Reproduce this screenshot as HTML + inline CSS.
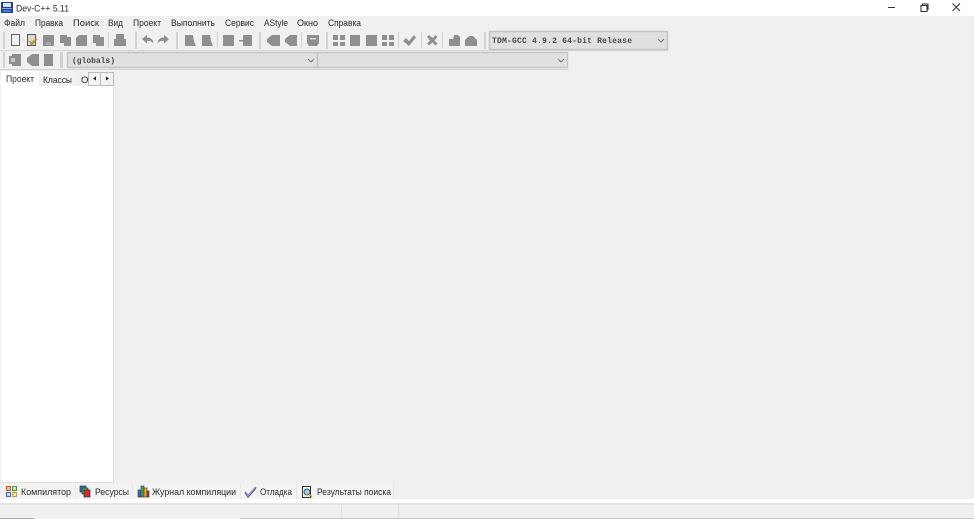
<!DOCTYPE html>
<html><head><meta charset="utf-8"><style>
html,body{margin:0;padding:0;background:#f0f0f0;width:974px;height:519px;overflow:hidden}
svg{display:block;filter:blur(.35px)}
text{font-family:"Liberation Sans",sans-serif;font-size:9.5px;fill:#2a2a2a}
.m{font-family:"Liberation Mono",monospace;font-size:8px;font-weight:bold;fill:#4a4a4a}
.g{fill:#8f8f8f}
.sep{fill:#d2d2d2}
.cb{fill:#e0e0e0;stroke:#c4c4c4;stroke-width:1.500}
.ar{fill:none;stroke:#777}
</style></head><body>
<svg width="974" height="519" viewBox="0 0 974 519" xmlns="http://www.w3.org/2000/svg">
<rect width="974" height="519" fill="#f0f0f0"/>
<!-- title bar -->
<rect width="974" height="16" fill="#fff"/>
<rect x="1" y="2" width="12" height="11" fill="#1f3f95"/>
<rect x="3" y="3" width="8" height="4" fill="#dfe6f2"/>
<rect x="2" y="8" width="10" height="1" fill="#8aa8dc"/>
<rect x="3" y="10" width="8" height="2" fill="#3f7fd0"/>
<text x="16" y="11.500" textLength="53" lengthAdjust="spacingAndGlyphs">Dev-C++ 5.11</text>
<path d="M888 7.500h7" stroke="#333" stroke-width="1"/>
<path d="M921 5.500h6v6h-6z M922.500 5.500v-1.500h5.500v5.500h-1" fill="none" stroke="#333" stroke-width="1.100"/>
<path d="M952.500 3.500l7.500 7.500M960 3.500l-7.500 7.500" stroke="#333" stroke-width="1"/>
<!-- menu -->
<text x="4" y="26" textLength="21" lengthAdjust="spacingAndGlyphs">Файл</text>
<text x="35" y="26" textLength="28" lengthAdjust="spacingAndGlyphs">Правка</text>
<text x="73" y="26" textLength="26" lengthAdjust="spacingAndGlyphs">Поиск</text>
<text x="108" y="26" textLength="15" lengthAdjust="spacingAndGlyphs">Вид</text>
<text x="133" y="26" textLength="28" lengthAdjust="spacingAndGlyphs">Проект</text>
<text x="171" y="26" textLength="44" lengthAdjust="spacingAndGlyphs">Выполнить</text>
<text x="225" y="26" textLength="29" lengthAdjust="spacingAndGlyphs">Сервис</text>
<text x="264" y="26" textLength="24" lengthAdjust="spacingAndGlyphs">AStyle</text>
<text x="297" y="26" textLength="21" lengthAdjust="spacingAndGlyphs">Окно</text>
<text x="328" y="26" textLength="33" lengthAdjust="spacingAndGlyphs">Справка</text>
<!-- toolbar 1 -->
<rect x="0" y="50" width="668" height="1" fill="#d6d6d6"/>
<rect x="3" y="32" width="2" height="17" class="sep"/>
<rect x="11.500" y="34.500" width="8" height="11" fill="#f0f0f0" stroke="#666"/>
<rect x="27.500" y="34.500" width="8" height="11" fill="#dcd8cc" stroke="#555"/>
<path d="M30 44l6-6 1.500 1.500-6 6z" fill="#b98f35"/>
<path d="M29 41l4 3" stroke="#a97a20"/>
<rect x="43" y="35" width="11" height="11" class="g"/>
<rect x="46" y="42" width="5" height="3" fill="#aaa"/>
<path class="g" d="M60 35h7v2h4v9h-7v-3h-4z"/>
<path class="g" d="M79 35h8v11h-11v-8z"/>
<path class="g" d="M93 35h7v2h4v9h-8v-3h-3z"/>
<rect x="108" y="32" width="1" height="16" class="sep"/>
<path class="g" d="M116 34h8v5h2v7h-12v-7h2z"/>
<rect x="135" y="32" width="2" height="17" class="sep"/>
<path class="g" d="M142 39l5-4v2.500c4 0 6 2 6.500 6-2-2.500-4-3-6.500-2.500v2.500z"/>
<path class="g" d="M169 39l-5-4v2.500c-4 0-6 2-6.500 6 2-2.500 4-3 6.500-2.500v2.500z"/>
<rect x="176" y="32" width="2" height="17" class="sep"/>
<path class="g" d="M185 35h8l1 6 2 5h-11z"/>
<path class="g" d="M202 35h8l1 6 2 5h-11z"/>
<rect x="217" y="32" width="1" height="16" class="sep"/>
<rect x="223" y="35" width="11" height="11" class="g"/>
<rect x="243" y="35" width="9" height="11" class="g"/>
<path class="g" d="M239 40h4v1.500h-4z"/>
<rect x="259" y="32" width="2" height="17" class="sep"/>
<path class="g" d="M272 35h8v11h-8l-5-4v-3z"/>
<path class="g" d="M290 35h7v11h-7l-5-4v-3z"/>
<rect x="301" y="32" width="1" height="16" class="sep"/>
<path class="g" d="M307 35h12v8l-2 3h-8l-2-3z"/>
<rect x="310" y="38" width="6" height="1.500" fill="#d8d8d8"/>
<rect x="326" y="32" width="2" height="17" class="sep"/>
<path class="g" d="M333 35h5v5h-5zM340 35h5v5h-5zM333 42h5v4h-5zM340 42h5v4h-5z"/>
<rect x="350" y="35" width="10" height="11" class="g"/>
<rect x="366" y="35" width="11" height="11" class="g"/>
<path class="g" d="M382 35h5v5h-5zM389 35h5v5h-5zM382 42h5v4h-5zM389 42h5v4h-5z"/>
<rect x="398" y="32" width="1" height="16" class="sep"/>
<path class="g" d="M403 41l3-3 3 3 5-6 2 2.500-7 8.500z"/>
<rect x="421" y="32" width="1" height="16" class="sep"/>
<path class="g" d="M427 37l2-2 3.500 3 3-3 2 2-3 3.500 3 3-2 2-3-3-3.500 3-2-2 3-3z"/>
<rect x="442" y="32" width="1" height="16" class="sep"/>
<path class="g" d="M449 39l4 0 1-4h4l2 2v9h-11z"/>
<path class="g" d="M465 40l4-4h4l4 4v6h-12z"/>
<rect x="484" y="32" width="2" height="17" class="sep"/>
<rect x="489.500" y="31.500" width="178" height="18" class="cb"/>
<text class="m" x="492" y="43" textLength="140">TDM-GCC 4.9.2 64-bit Release</text>
<path d="M658 39l3 3 3-3" class="ar"/>
<!-- toolbar 2 -->
<rect x="0" y="69" width="568" height="1" fill="#d0d0d0"/>
<rect x="3" y="52" width="2" height="16" class="sep"/>
<path class="g" d="M9 56h3v-2h9v12h-9v-2h-3z"/>
<rect x="11" y="58" width="4" height="4" fill="#c8c8c8"/>
<path class="g" d="M32 54h7v12h-7l-5-4v-4z"/>
<rect x="44" y="54" width="9" height="12" class="g"/>
<rect x="60" y="52" width="3" height="16" class="sep"/>
<rect x="67.500" y="52.500" width="250" height="15" class="cb"/>
<rect x="317.500" y="52.500" width="250" height="15" class="cb"/>
<text class="m" x="72" y="63" textLength="43">(globals)</text>
<path d="M308 59l3 3 3-3" class="ar"/>
<path d="M558 59l3 3 3-3" class="ar"/>
<!-- left tabs -->
<rect x="1" y="71" width="38" height="16" fill="#fff"/>
<rect x="40" y="73" width="36" height="13" fill="#f3f3f3"/>
<text x="6" y="82" textLength="28" lengthAdjust="spacingAndGlyphs">Проект</text>
<text x="43" y="83" textLength="29" lengthAdjust="spacingAndGlyphs">Классы</text>
<text x="81" y="83">О</text>
<rect x="88.500" y="72.500" width="12" height="13" fill="#f2f2f2" stroke="#bbb"/>
<rect x="100.500" y="72.500" width="13" height="13" fill="#f2f2f2" stroke="#bbb"/>
<path d="M96 76.500v4l-3-2z" fill="#222"/>
<path d="M106 76.500v4l3-2z" fill="#222"/>
<rect x="1" y="86" width="112" height="396" fill="#fff"/>
<rect x="113" y="86" width="1" height="396" fill="#dcdcdc"/>
<rect x="0" y="482" width="114" height="1" fill="#dedede"/>
<!-- bottom tabs -->
<rect x="1" y="484" width="392" height="15" fill="#f3f3f3"/>
<g fill="#e6e6e6"><rect x="75" y="484" width="1" height="15"/><rect x="132" y="484" width="1" height="15"/><rect x="240" y="484" width="1" height="15"/><rect x="296" y="484" width="1" height="15"/><rect x="393" y="484" width="1" height="15"/></g>
<rect x="6.500" y="486.500" width="4" height="4" fill="#f0c8a0" stroke="#c05a20"/>
<rect x="12.500" y="486.500" width="4" height="4" fill="#c8e8c0" stroke="#4a9040"/>
<rect x="6.500" y="492.500" width="4" height="4" fill="#c0d8f0" stroke="#3a70b0"/>
<rect x="12.500" y="492.500" width="4" height="4" fill="#f5e8a0" stroke="#c09a20"/>
<rect x="80" y="486" width="6" height="6" fill="#3a6fc0" stroke="#333" stroke-width=".7"/>
<rect x="82" y="488" width="6" height="6" fill="#50a050" stroke="#333" stroke-width=".7"/>
<rect x="84" y="490" width="6" height="7" fill="#c93030" stroke="#333" stroke-width=".7"/>
<rect x="138" y="490" width="3" height="7" fill="#3a6fc0" stroke="#333" stroke-width=".6"/>
<rect x="141" y="486" width="3" height="11" fill="#50a050" stroke="#333" stroke-width=".6"/>
<rect x="144" y="488" width="3" height="9" fill="#e0b030" stroke="#333" stroke-width=".6"/>
<rect x="147" y="491" width="2" height="6" fill="#c93030" stroke="#333" stroke-width=".6"/>
<path d="M245 492l3 4 8-9" fill="none" stroke="#9a88d0" stroke-width="2"/>
<path d="M245 493l3 4.500 8-9" fill="none" stroke="#444" stroke-width=".6"/>
<rect x="302.500" y="486.500" width="8" height="11" fill="#eee" stroke="#333"/>
<circle cx="307" cy="492" r="3" fill="#9cd0e8" stroke="#333" stroke-width=".8"/>
<path d="M309 494l3 3" stroke="#c09020" stroke-width="1.500"/>
<text x="21" y="495" textLength="50" lengthAdjust="spacingAndGlyphs">Компилятор</text>
<text x="95" y="495" textLength="34" lengthAdjust="spacingAndGlyphs">Ресурсы</text>
<text x="152" y="495" textLength="84" lengthAdjust="spacingAndGlyphs">Журнал компиляции</text>
<text x="260" y="495" textLength="32" lengthAdjust="spacingAndGlyphs">Отладка</text>
<text x="317" y="495" textLength="74" lengthAdjust="spacingAndGlyphs">Результаты поиска</text>
<!-- bottom strip / status -->
<rect x="0" y="499" width="974" height="4" fill="#fff"/>
<rect x="0" y="503" width="974" height="2" fill="#e4e4e4"/>
<rect x="341" y="505" width="1" height="14" fill="#dcdcdc"/>
<rect x="398" y="505" width="1" height="14" fill="#dcdcdc"/>
<rect x="0" y="518" width="34" height="1" fill="#a8a8a8"/>
<rect x="240" y="518" width="734" height="1" fill="#c4c4c4"/>
</svg>
</body></html>
